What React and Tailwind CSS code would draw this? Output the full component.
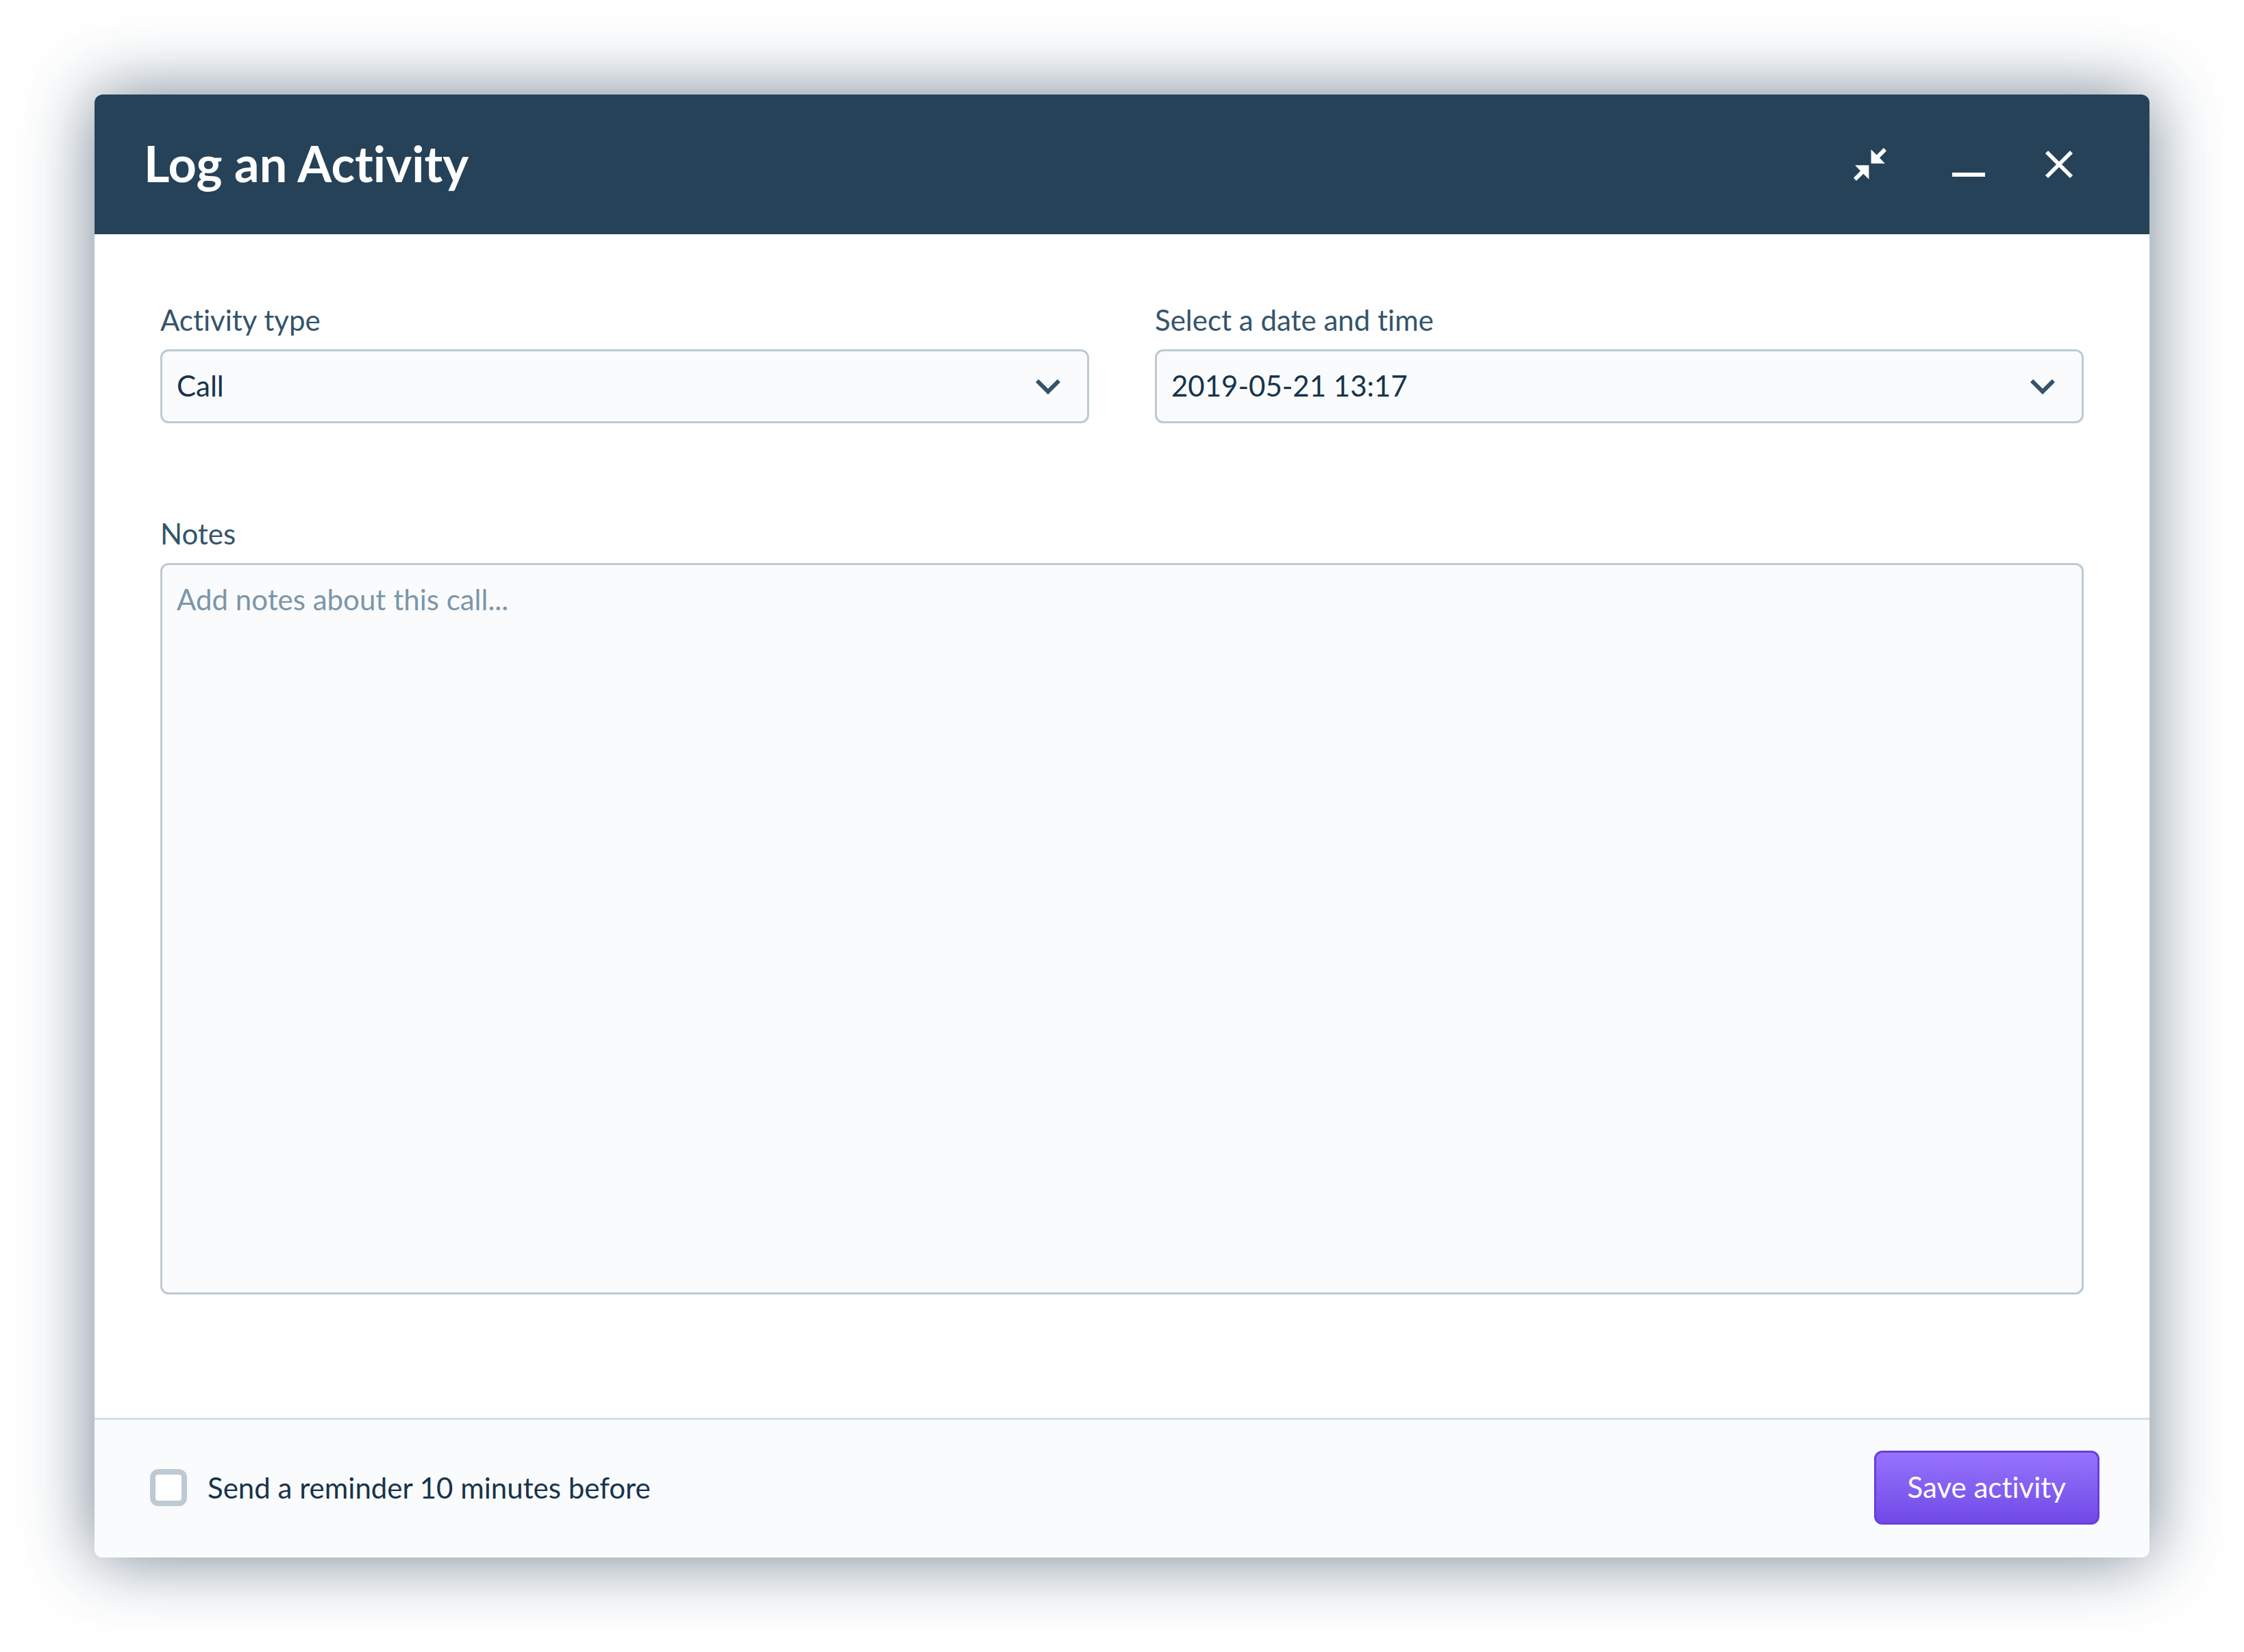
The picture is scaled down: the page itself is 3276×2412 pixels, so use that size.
import React from "react";

function Chevron() {
  return (
    <svg
      viewBox="0 0 24 24"
      aria-hidden="true"
      className="pointer-events-none col-start-1 row-start-1 mr-6 size-[72px] self-center justify-self-end fill-[#34546b]"
    >
      <path d="M7.41 8.59 12 13.17l4.59-4.58L18 10l-6 6-6-6z" />
    </svg>
  );
}

function SelectField({ id, label, value }) {
  return (
    <div className="flex min-w-0 flex-1 flex-col gap-[14px]">
      <label htmlFor={id} className="self-start text-[#34546b]">
        {label}
      </label>
      <div className="grid">
        <select
          id={id}
          defaultValue={value}
          className="col-start-1 row-start-1 h-[108px] w-full appearance-none rounded-xl border-3 border-[#bccad3] bg-[#fafbfd] pr-24 pb-0.5 pl-[21px] text-[#17344b]"
        >
          <option value={value}>{value}</option>
        </select>
        <Chevron />
      </div>
    </div>
  );
}

function HeaderButton({ label, children }) {
  return (
    <button type="button" aria-label={label} className="size-[72px]">
      <svg viewBox="0 0 72 72" aria-hidden="true" className="size-full fill-white stroke-white">
        {children}
      </svg>
    </button>
  );
}

export default function App() {
  return (
    <div className="flex min-h-screen bg-white p-[138px] font-['Lato',sans-serif] text-[42px] leading-[58px] [font-variant-ligatures:none]">
      <form
        className="flex flex-1 flex-col rounded-xl bg-white shadow-[0_0_102px_rgba(27,54,78,0.62)]"
        onSubmit={(e) => e.preventDefault()}
      >
        <header className="flex h-[204px] items-center justify-between rounded-t-xl bg-[#254258] pr-24 pl-[72px]">
          <h1 className="pb-1 text-[72px] leading-[84px] font-bold text-white">Log an Activity</h1>
          <div className="flex items-center gap-[60px]">
            <div className="mr-3 flex">
              <HeaderButton label="Collapse">
                <path strokeWidth="0" d="M37.6 14.3V34.7H57.8L50 26.4 60 16.2 56 12 45.7 22.2Z" />
                <path strokeWidth="0" d="M34.4 57.7V37.3H14.2L22 45.6 12 55.8 16 60 26.3 49.8Z" />
              </HeaderButton>
            </div>
            <HeaderButton label="Minimize">
              <path strokeWidth="0" d="M12 48h48v6H12z" />
            </HeaderButton>
            <HeaderButton label="Close">
              <path d="M18 18 54 54M54 18 18 54" strokeWidth="5.7" />
            </HeaderButton>
          </div>
        </header>

        <main className="flex flex-1 flex-col gap-[132px] px-24 pt-24 pb-[180px]">
          <div className="flex gap-24">
            <SelectField id="activity-type" label="Activity type" value="Call" />
            <SelectField id="activity-date" label="Select a date and time" value="2019-05-21 13:17" />
          </div>
          <div className="flex flex-1 flex-col gap-[14px]">
            <label htmlFor="notes" className="self-start text-[#34546b]">
              Notes
            </label>
            <textarea
              id="notes"
              placeholder="Add notes about this call..."
              className="w-full flex-1 resize-none rounded-xl border-3 border-[#bccad3] bg-[#fafbfd] p-[21px] text-[#17344b] placeholder:text-[#7b96aa]"
            />
          </div>
        </main>

        <footer className="flex h-[204px] items-center justify-between rounded-b-xl border-t-3 border-[#d4dfe5] bg-[#fafbfd] pr-[73px] pb-[3px] pl-[81px]">
          <label className="flex items-center gap-[30px] text-[#17344b]">
            <input
              type="checkbox"
              className="size-[54px] appearance-none rounded-xl border-8 border-[#bccad3] bg-white checked:bg-[#7249e6]"
            />
            Send a reminder 10 minutes before
          </label>
          <button
            type="submit"
            className="h-[108px] rounded-xl border-3 border-[#6840db] bg-linear-to-b from-[#9874fd] to-[#7048e6] bg-origin-border px-[46px] pb-0.5 text-white"
          >
            Save activity
          </button>
        </footer>
      </form>
    </div>
  );
}
